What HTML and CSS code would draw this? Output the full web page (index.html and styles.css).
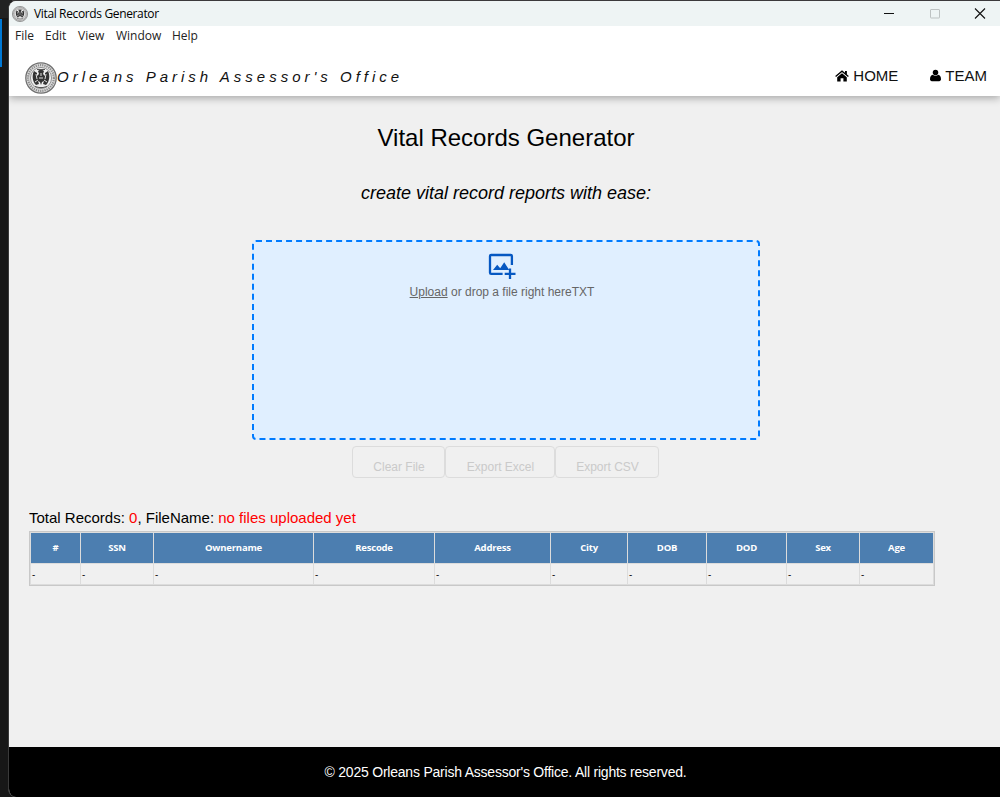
FILE: index.html
```html
<!DOCTYPE html>
<html lang="en">
<head>
<meta charset="utf-8">
<title>Vital Records Generator</title>
<link rel="stylesheet" href="styles.css">
</head>
<body>
<svg class="defs" aria-hidden="true">
  <symbol id="seal" viewBox="0 0 32 32">
    <circle cx="16" cy="16" r="15.2" fill="#dcdcdc" stroke="#707070" stroke-width="1.3"/>
    <circle cx="16" cy="16" r="12.9" fill="none" stroke="#8c8c8c" stroke-width="2.2" stroke-dasharray="1.2 1"/>
    <circle cx="16" cy="16" r="10.6" fill="#eee" stroke="#808080" stroke-width=".8"/>
    <path d="M9 9c-2 4-2 10 2 14l3-1-1-3 2 1 1 3 1-3 2-1-1 3 3 1c4-4 4-10 2-14l-3 2v3l-2-2 1-3-3-2-3 2 1 3-2 2v-3z" fill="#333"/>
    <path d="M11 12l1 5M21 12l-1 5M14 16h4M16 11v3M10 20l3-2M22 20l-3-2" stroke="#ddd" stroke-width="1" fill="none"/>
    <path d="M12 7.5h8M10 24.5l4 1h4l4-1" stroke="#555" fill="none"/>
  </symbol>
</svg>
<div class="window">
  <div class="titlebar">
    <svg class="app-icon"><use href="#seal"/></svg>
    <span class="app-title">Vital Records Generator</span>
    <div class="controls">
      <svg viewBox="0 0 12 12"><path d="M1 5.500h10" stroke="#111"/></svg>
      <svg viewBox="0 0 12 12"><rect x="1.500" y="1.500" width="9" height="8.500" rx=".5" stroke="#bdc2c2" fill="none"/></svg>
      <svg viewBox="0 0 12 12"><path d="M1 .5l10 10M11 .5L1 10.500" stroke="#111" stroke-width="1.100"/></svg>
    </div>
  </div>
  <div class="menu"><span class="m-file">File</span><span class="m-edit">Edit</span><span class="m-view">View</span><span class="m-window">Window</span><span>Help</span></div>
  <header class="nav">
    <svg class="logo"><use href="#seal"/></svg>
    <span class="brand">Orleans Parish Assessor's Office</span>
    <nav class="links">
      <a class="link"><svg class="home" viewBox="0 0 14 12"><path d="M7 3.2l4.800 4V11.500H8.400V8.300H5.600v3.200H2.200V7.200z"/><path d="M.6 6.600L7 1.200l6.400 5.400" fill="none" stroke="#000" stroke-width="1.300"/><path d="M10 .9h1.900V5L10 3.400z"/></svg>HOME</a>
      <a class="link"><svg class="user" viewBox="0 0 12 13"><circle cx="6" cy="3.200" r="3"/><path d="M3 5.700c-2 .2-3 2.200-3 5 0 1.300.8 2 2 2h8c1.200 0 2-.7 2-2 0-2.800-1-4.800-3-5-1.700 1.500-4.300 1.500-6 0z"/></svg>TEAM</a>
    </nav>
  </header>
  <main>
    <h1>Vital Records Generator</h1>
    <p class="subtitle">create vital record reports with ease:</p>
    <div class="dropzone">
      <svg class="upload-icon" viewBox="0 0 28 26"><path d="M23.900 12V3.200Q23.900 2 22.700 2H3.200Q2 2 2 3.200V19.700Q2 20.900 3.200 20.900H14.600" fill="none" stroke="#0658c2" stroke-width="2.300"/><path d="M5 17l4.200-5.200 3 3.400 4-6 5 7.800z" fill="#0658c2"/><path d="M22 15.500V26M16.700 20.900H27.500" stroke="#0658c2" stroke-width="2.300"/></svg>
      <p class="drop-text"><u>Upload</u> or drop a file right hereTXT</p>
    </div>
    <div class="actions">
      <button class="clear" disabled>Clear File</button>
      <button class="excel" disabled>Export Excel</button>
      <button class="csv" disabled>Export CSV</button>
    </div>
    <div class="summary">Total Records: <b>0</b>, FileName: <b>no files uploaded yet</b></div>
    <table>
      <colgroup><col class="c1"><col class="c2"><col class="c3"><col class="c4"><col class="c5"><col class="c6"><col class="c7"><col class="c8"><col class="c9"><col class="c10"></colgroup>
      <thead><tr><th>#</th><th>SSN</th><th>Ownername</th><th>Rescode</th><th>Address</th><th>City</th><th>DOB</th><th>DOD</th><th>Sex</th><th>Age</th></tr></thead>
      <tbody><tr><td>-</td><td>-</td><td>-</td><td>-</td><td>-</td><td>-</td><td>-</td><td>-</td><td>-</td><td>-</td></tr></tbody>
    </table>
  </main>
  <footer><span>© 2025 Orleans Parish Assessor's Office. All rights reserved.</span></footer>
</div>
</body>
</html>
```

FILE: styles.css
```css
* { box-sizing: border-box; }
body {
  margin: 0;
  height: 797px;
  padding: 1px 0 0 8px;
  overflow: hidden;
  background:
    linear-gradient(#0078d4, #0078d4) 0 19px / 2px 48px no-repeat,
    linear-gradient(#3b393b, #3b393b) 12px 0 / 100% 12px no-repeat,
    linear-gradient(#222, #222) 0 0 / 12px 18px no-repeat,
    #171717;
  font-family: "Liberation Sans", Arial, sans-serif;
  color: #000;
}
.defs { display: block; width: 0; height: 0; }
.window {
  display: flex;
  flex-direction: column;
  height: 796px;
  border-left: 1px solid #3a3a3a;
  border-radius: 8px 0 0 8px;
  overflow: hidden;
  background: #f0f0f0;
}
.titlebar {
  display: flex;
  align-items: center;
  flex: 0 0 25px;
  padding-left: 3px;
  background: #eef4f4;
}
.app-icon { width: 16px; height: 16px; margin-right: 6px; }
.app-title { font: 12px "Open Sans", sans-serif; letter-spacing: -.36px; white-space: nowrap; }
.controls { display: flex; gap: 33.500px; margin-left: auto; padding-right: 14px; }
.controls svg { width: 12px; height: 12px; }
.menu {
  display: flex;
  flex: 0 0 20px;
  padding-left: 6px;
  background: #fff;
  font: 12px/20px "Open Sans", sans-serif;
  color: #222;
  position: relative;
  z-index: 2;
}
.m-file { width: 30px; }
.m-edit { width: 33px; }
.m-view { width: 38px; }
.m-window { width: 56px; }
.nav {
  display: flex;
  align-items: center;
  flex: 0 0 50px;
  padding: 13px 13px 0 16px;
  background: #fff;
  box-shadow: 0 2px 8px rgba(0, 0, 0, .32);
  z-index: 1;
}
.logo { width: 32px; height: 32px; }
.brand { padding-bottom: 2px; font-size: 15px; font-style: italic; letter-spacing: 4px; white-space: nowrap; color: #111; }
.links { display: flex; gap: 32px; margin-left: auto; padding-bottom: 4px; }
.link { display: flex; align-items: center; font-size: 15px; color: #111; }
.home { width: 14px; height: 12px; margin-right: 4px; }
.user { width: 11px; height: 13px; margin-right: 4px; }
main { flex: 1; padding: 0 0 0 20px; }
h1 { margin: 28px 17px 0 0; font-size: 24px; line-height: 28px; font-weight: 400; text-align: center; }
.subtitle { margin: 31px 17px 0 0; font-size: 18px; line-height: 20px; font-style: italic; text-align: center; }
.dropzone {
  display: flex;
  flex-direction: column;
  align-items: center;
  width: 508px;
  height: 200px;
  margin: 37px 0 0 223px;
  padding-top: 11px;
  border: 2px dashed #007bff;
  border-radius: 4px;
  background: #e0efff;
}
.upload-icon { width: 28px; height: 26px; margin-left: -9px; }
.drop-text { margin: 5px 0 0 -8px; font-size: 12px; line-height: 16px; color: #666; }
.actions { display: flex; margin: 6px 0 0 323px; }
button {
  height: 32px;
  padding: 9px 0 0 1px;
  border: 1px solid #dcdcdc;
  border-radius: 4px;
  background: #f0f0f0;
  color: #cacaca;
  font: 12px "Liberation Sans", Arial, sans-serif;
}
.clear { width: 93px; }
.excel { width: 110px; }
.csv { width: 104px; }
.summary { margin-top: 31px; font-size: 15px; line-height: 18px; }
.summary b { font-weight: 400; color: #f00; }
table {
  width: 906px;
  margin-top: 4px;
  table-layout: fixed;
  border-collapse: separate;
  border-spacing: 0;
  border: 1px solid #c8c8c8;
  box-shadow: inset 1px 1px #ddd;
  padding: 1px 0 0 1px;
}
.c1 { width: 50px; } .c2 { width: 73px; } .c3 { width: 160px; } .c4 { width: 121px; } .c5 { width: 116px; }
.c6 { width: 77px; } .c7 { width: 79px; } .c8 { width: 80px; } .c9 { width: 73px; } .c10 { width: 74px; }
th, td { border: 0 solid #dcdcdc; border-width: 0 1px 1px 0; }
th { height: 31px; padding: 0 0 2px; background: #4c7eb0; background-clip: padding-box; color: #fff; font: bold 9.5px "Open Sans", sans-serif; letter-spacing: -.2px; }
td { height: 21px; padding: 0 1px; font: 10px "Open Sans", sans-serif; }
footer {
  display: flex;
  align-items: center;
  justify-content: center;
  flex: 0 0 50px;
  padding-left: 2px;
  background: #000;
  color: #fff;
  font-size: 14px;
  letter-spacing: -.22px;
}
```
